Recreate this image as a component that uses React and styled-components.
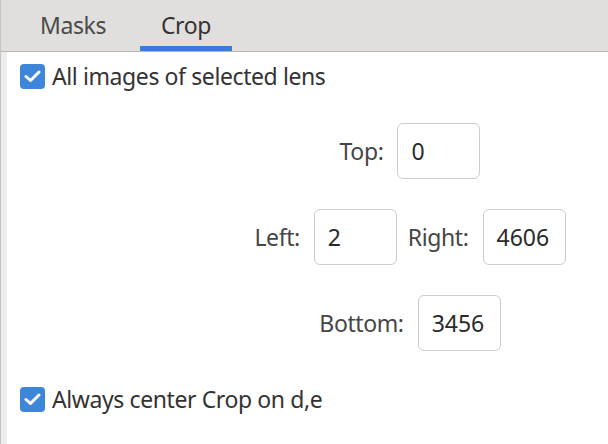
import React, { useState } from 'react';
import styled, { createGlobalStyle } from 'styled-components';

const Global = createGlobalStyle`
  html, body {
    margin: 0;
    padding: 0;
    background: #ffffff;
  }
  body {
    font-family: "Noto Sans", "Open Sans", sans-serif;
    color: #2e2e2e;
  }
`;

const Frame = styled.div`
  width: 608px;
  height: 444px;
  display: flex;
  flex-direction: column;
  border-left: 1px solid #c6c3c0;
  box-shadow: inset 6px 0 0 #efedeb;
  padding-left: 7px;
  box-sizing: border-box;
  overflow: hidden;
`;

const TabBar = styled.div`
  height: 51px;
  background: #e1dfdd;
  border-bottom: 1px solid #b9b6b3;
  display: flex;
  align-items: stretch;
  margin-left: -7px;
  padding-left: 26px;
`;

const Tab = styled.div`
  width: 92px;
  display: flex;
  align-items: center;
  justify-content: center;
  font-size: 23px;
  letter-spacing: -0.4px;
  color: ${p => (p.active ? '#333' : '#4a4a4a')};
  box-sizing: border-box;
  border-bottom: 5px solid ${p => (p.active ? '#3b7dd6' : 'transparent')};
  padding-top: 3px;
  margin-left: ${p => p.offset || 0}px;
  cursor: default;
`;

const Body = styled.div`
  flex: 1;
  background: #fff;
  display: flex;
  flex-direction: column;
  padding: 11px 0 0 12px;
`;

const CheckRow = styled.label`
  display: flex;
  align-items: center;
  gap: 7px;
  font-size: 23px;
  letter-spacing: -0.4px;
  color: #333;
  height: 26px;
`;

const Box = styled.span`
  width: 25px;
  height: 25px;
  border-radius: 4px;
  background: #3d86da;
  display: inline-flex;
  align-items: center;
  justify-content: center;
  flex: none;
`;

const Grid = styled.div`
  display: flex;
  flex-direction: column;
  gap: 30px;
  padding-left: 192px;
  margin-top: 34px;
  margin-bottom: 35px;
`;

const Row = styled.div`
  display: flex;
  justify-content: center;
  align-items: center;
  gap: 14px;
`;

const Label = styled.span`
  font-size: 23px;
  letter-spacing: -0.4px;
  color: #454545;
`;

const Field = styled.div`
  width: 83px;
  height: 56px;
  box-sizing: border-box;
  border: 1px solid #cfcccb;
  border-radius: 6px;
  display: flex;
  align-items: center;
  padding-left: 13px;
  font-size: 23px;
  color: #2a2a2a;
  margin-right: ${p => p.gapRight || 0}px;
`;

const Check = ({ children }) => (
  <CheckRow>
    <Box>
      <svg width="17" height="13" viewBox="0 0 17 13">
        <path d="M2 6.5 L6.5 10.5 L15 2" fill="none" stroke="#fff" strokeWidth="3" strokeLinecap="round" strokeLinejoin="round" />
      </svg>
    </Box>
    {children}
  </CheckRow>
);

export default function App() {
  const [tab] = useState('crop');
  return (
    <>
      <Global />
      <Frame>
        <TabBar>
          <Tab active={tab === 'masks'}>Masks</Tab>
          <Tab active={tab === 'crop'} offset={21}>Crop</Tab>
        </TabBar>
        <Body>
          <Check>All images of selected lens</Check>
          <Grid>
            <Row>
              <Label>Top:</Label>
              <Field>0</Field>
            </Row>
            <Row>
              <Label>Left:</Label>
              <Field gapRight={-3}>2</Field>
              <Label>Right:</Label>
              <Field>4606</Field>
            </Row>
            <Row>
              <Label>Bottom:</Label>
              <Field>3456</Field>
            </Row>
          </Grid>
          <Check>Always center Crop on d,e</Check>
        </Body>
      </Frame>
    </>
  );
}
